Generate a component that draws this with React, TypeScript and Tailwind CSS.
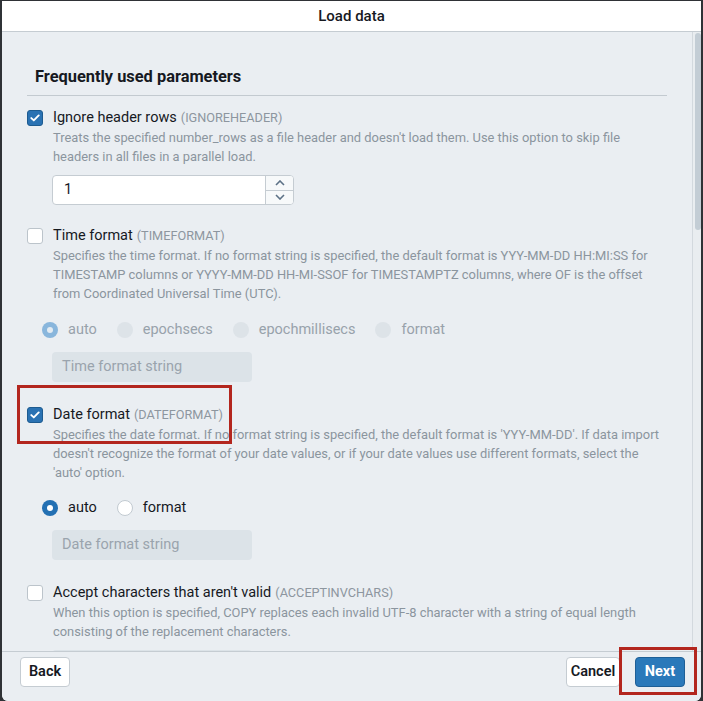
import React from "react";

function CheckBox({ checked }: { checked: boolean }) {
  if (checked) {
    return (
      <div className="mt-[2px] w-[16px] h-[16px] shrink-0 rounded-[3px] bg-[#2a72b3] border border-[#1d5b90] flex items-center justify-center">
        <svg width="10" height="8" viewBox="0 0 10 8">
          <path d="M1.3 4.1 L3.8 6.4 L8.7 1.4" fill="none" stroke="#ffffff" strokeWidth="1.9" strokeLinecap="round" strokeLinejoin="round" />
        </svg>
      </div>
    );
  }
  return <div className="mt-[2px] w-[16px] h-[16px] shrink-0 rounded-[3px] bg-white border border-[#bcc4cb]" />;
}

function Radio({ kind }: { kind: "on" | "off" | "disOn" | "disOff" }) {
  if (kind === "on")
    return (
      <div className="w-[16px] h-[16px] rounded-full bg-[#2370b3] flex items-center justify-center">
        <div className="w-[6px] h-[6px] rounded-full bg-white" />
      </div>
    );
  if (kind === "off") return <div className="w-[16px] h-[16px] rounded-full bg-white border border-[#c2cad1]" />;
  if (kind === "disOn")
    return (
      <div className="w-[16px] h-[16px] rounded-full bg-[#89b6dc] flex items-center justify-center">
        <div className="w-[6px] h-[6px] rounded-full bg-[#e3ebf2]" />
      </div>
    );
  return <div className="w-[16px] h-[16px] rounded-full bg-[#dde3e8]" />;
}

function RadioItem({ kind, label, disabled }: { kind: "on" | "off" | "disOn" | "disOff"; label: string; disabled?: boolean }) {
  return (
    <div className="flex items-center">
      <Radio kind={kind} />
      <span className={"ml-[10px] text-[14.5px] leading-[20px] " + (disabled ? "text-[#98a2ab]" : "text-[#16191f]")}>{label}</span>
    </div>
  );
}

function Item({
  checked,
  label,
  code,
  lines,
}: {
  checked: boolean;
  label: string;
  code: string;
  lines: string[];
}) {
  return (
    <div className="flex">
      <CheckBox checked={checked} />
      <div className="ml-[10px]">
        <div className="text-[14.5px] leading-[20px] text-[#16191f] whitespace-nowrap">
          {label}
          <span className="ml-[4px] text-[12.7px] text-[#8d969f]">{code}</span>
        </div>
        <div className="text-[12.9px] leading-[19px] text-[#8b959e] whitespace-nowrap">
          {lines.map((l, i) => (
            <div key={i}>{l}</div>
          ))}
        </div>
      </div>
    </div>
  );
}

function DisabledInput({ placeholder }: { placeholder: string }) {
  return (
    <div className="ml-[25px] w-[200px] h-[30px] rounded-[4px] bg-[#dce3e8] px-[10px] flex items-center text-[14.5px] text-[#9aa4ad]">
      {placeholder}
    </div>
  );
}

export default function App() {
  return (
    <div className="w-[703px] h-[701px] bg-[#2f3236] pl-[2px] pr-[2px] pt-px font-['Roboto','Liberation_Sans',sans-serif]">
      <div className="h-full flex flex-col bg-[#eaeef2] rounded-b-[6px] overflow-hidden relative">
        <div className="h-[31px] shrink-0 bg-white border-b border-[#c5ccd2] flex items-center justify-center text-[15px] font-medium text-[#16191f]">
          Load data
        </div>
        <div className="flex-1 min-h-0 flex">
          <div className="flex-1 min-w-0 overflow-hidden pl-[25px] pr-[25px] pt-[33px]">
            <div className="pl-[8px] text-[16.4px] leading-[24px] font-bold text-[#16191f]">Frequently used parameters</div>
            <div className="mt-[6px] h-px bg-[#c3cad0]" />

            <div className="mt-[12px]">
              <Item
                checked
                label="Ignore header rows"
                code="(IGNOREHEADER)"
                lines={[
                  "Treats the specified number_rows as a file header and doesn't load them. Use this option to skip file",
                  "headers in all files in a parallel load.",
                ]}
              />
              <div className="mt-[9px] ml-[25px] w-[242px] h-[30px] flex rounded-[4px] border border-[#c5ccd2] bg-white overflow-hidden">
                <div className="flex-1 px-[11px] flex items-center text-[14.5px] text-[#16191f]">1</div>
                <div className="w-[28px] border-l border-[#c5ccd2] flex flex-col bg-[#f7f9fa]">
                  <div className="flex-1 flex items-center justify-center border-b border-[#c5ccd2]">
                    <svg width="10" height="6" viewBox="0 0 10 6">
                      <path d="M1 5 L5 1 L9 5" fill="none" stroke="#5c7186" strokeWidth="1.6" />
                    </svg>
                  </div>
                  <div className="flex-1 flex items-center justify-center">
                    <svg width="10" height="6" viewBox="0 0 10 6">
                      <path d="M1 1 L5 5 L9 1" fill="none" stroke="#5c7186" strokeWidth="1.6" />
                    </svg>
                  </div>
                </div>
              </div>
            </div>

            <div className="mt-[21px]">
              <Item
                checked={false}
                label="Time format"
                code="(TIMEFORMAT)"
                lines={[
                  "Specifies the time format. If no format string is specified, the default format is YYY-MM-DD HH:MI:SS for",
                  "TIMESTAMP columns or YYYY-MM-DD HH-MI-SSOF for TIMESTAMPTZ columns, where OF is the offset",
                  "from Coordinated Universal Time (UTC).",
                ]}
              />
              <div className="mt-[17px] ml-[15px] flex gap-[20px]">
                <RadioItem kind="disOn" label="auto" disabled />
                <RadioItem kind="disOff" label="epochsecs" disabled />
                <RadioItem kind="disOff" label="epochmillisecs" disabled />
                <RadioItem kind="disOff" label="format" disabled />
              </div>
              <div className="mt-[12px]">
                <DisabledInput placeholder="Time format string" />
              </div>
            </div>

            <div className="mt-[23px] relative">
              <Item
                checked
                label="Date format"
                code="(DATEFORMAT)"
                lines={[
                  "Specifies the date format. If no format string is specified, the default format is 'YYY-MM-DD'. If data import",
                  "doesn't recognize the format of your date values, or if your date values use different formats, select the",
                  "'auto' option.",
                ]}
              />
              <div className="absolute left-[-10px] top-[-20px] w-[215px] h-[59px] border-[3px] border-[#b3261e]" />
              <div className="mt-[16px] ml-[15px] flex gap-[20px]">
                <RadioItem kind="on" label="auto" />
                <RadioItem kind="off" label="format" />
              </div>
              <div className="mt-[12px]">
                <DisabledInput placeholder="Date format string" />
              </div>
            </div>

            <div className="mt-[23px]">
              <Item
                checked={false}
                label="Accept characters that aren't valid"
                code="(ACCEPTINVCHARS)"
                lines={[
                  "When this option is specified, COPY replaces each invalid UTF-8 character with a string of equal length",
                  "consisting of the replacement characters.",
                ]}
              />
              <div className="mt-[9px]">
                <DisabledInput placeholder="" />
              </div>
            </div>
          </div>
          <div className="w-[9px] shrink-0 border-l border-[#d3d9de] bg-[#e9edf0] pl-[2px] pt-px">
            <div className="w-[6px] h-[197px] rounded-full bg-[#c3cdd5]" />
          </div>
        </div>
        <div className="h-[50px] shrink-0 border-t border-[#c5ccd2] bg-[#eaeef2] relative flex items-start pt-[5px] pl-[18px] pr-[16px]">
          <button className="h-[30px] w-[50px] rounded-[4px] border border-[#c5ccd2] bg-white text-[14.5px] font-semibold text-[#16191f]">
            Back
          </button>
          <div className="flex-1" />
          <button className="h-[30px] w-[54px] rounded-[4px] border border-[#c5ccd2] bg-white text-[14.5px] font-semibold text-[#16191f]">
            Cancel
          </button>
          <button className="ml-[15px] h-[30px] w-[50px] rounded-[4px] border border-[#1e5f96] bg-[#2a79ba] text-[14.5px] font-bold text-white">
            Next
          </button>
          <div className="absolute left-[617px] top-[-5px] w-[78px] h-[48px] border-[3px] border-[#b3261e] z-10" />
        </div>
      </div>
    </div>
  );
}
